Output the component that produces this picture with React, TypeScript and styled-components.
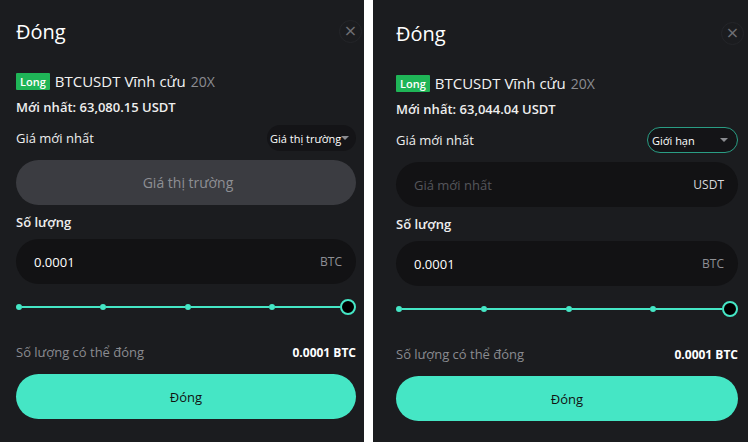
import React from "react";
import styled, { createGlobalStyle } from "styled-components";

const GlobalStyle = createGlobalStyle`
    html, body {
        margin: 0;
        padding: 0;
        background: #ffffff;
    }
    body {
        font-family: "Open Sans", "Noto Sans", Arial, sans-serif;
    }
`;

const Page = styled.div`
    display: flex;
    width: 751px;
    height: 442px;
    background: #ffffff;
`;

const Panel = styled.div<{ $wide?: boolean }>`
    width: ${(p) => (p.$wide ? "375px" : "364px")};
    margin-left: ${(p) => (p.$wide ? "9px" : "0")};
    height: 442px;
    box-sizing: border-box;
    padding: ${(p) => (p.$wide ? "2px 10px 0 23px" : "0 8px 0 16px")};
    background: #1b1c1f;
    display: flex;
    flex-direction: column;
    color: #ffffff;
`;

const Header = styled.div`
    height: 62px;
    display: flex;
    align-items: center;
    justify-content: space-between;
`;

const Title = styled.h1`
    margin: 0;
    font-size: 20px;
    font-weight: 500;
    color: #ffffff;
`;

const CloseButton = styled.button`
    width: 23px;
    height: 23px;
    margin-right: -6px;
    border-radius: 50%;
    border: 1px solid #242529;
    background: transparent;
    color: #6e6f74;
    font-size: 16px;
    line-height: 1;
    padding: 0;
    display: flex;
    align-items: center;
    justify-content: center;
    font-family: "DejaVu Sans", sans-serif;
`;

const PairRow = styled.div`
    margin-top: 9px;
    height: 20px;
    display: flex;
    align-items: center;
    gap: 5px;
`;

const Badge = styled.span`
    background: #1fb557;
    color: #ffffff;
    font-size: 11px;
    font-weight: 600;
    padding: 0 4px;
    height: 17px;
    line-height: 17px;
    border-radius: 1px;
`;

const Pair = styled.span`
    font-size: 15px;
    font-weight: 500;
    color: #f2f2f2;
`;

const Leverage = styled.span`
    font-size: 14px;
    color: #8c8d92;
`;

const Latest = styled.div`
    margin-top: 6px;
    height: 20px;
    line-height: 20px;
    font-size: 13px;
    font-weight: 600;
    color: #eeeeee;
`;

const PriceRow = styled.div`
    margin-top: 8px;
    height: 26px;
    display: flex;
    align-items: center;
    justify-content: space-between;
    font-size: 13px;
    color: #eeeeee;
`;

const Select = styled.div<{ $active?: boolean }>`
    height: 26px;
    box-sizing: border-box;
    width: ${(p) => (p.$active ? "91px" : "89px")};
    border-radius: 13px;
    background: #141417;
    border: ${(p) => (p.$active ? "1.5px solid #2a9d84" : "none")};
    display: flex;
    align-items: center;
    justify-content: ${(p) => (p.$active ? "space-between" : "flex-start")};
    padding: ${(p) => (p.$active ? "0 9px 0 4px" : "0 0 0 3px")};
    font-size: 11px;
    font-weight: 500;
    color: #ffffff;
`;

const Caret = styled.span`
    width: 0;
    height: 0;
    border-left: 4px solid transparent;
    border-right: 4px solid transparent;
    border-top: 4px solid #8a8b90;
`;

const Field = styled.div<{ $muted?: boolean }>`
    height: 45px;
    border-radius: 23px;
    background: ${(p) => (p.$muted ? "#3b3c41" : "#121214")};
    display: flex;
    align-items: center;
    justify-content: ${(p) => (p.$muted ? "center" : "space-between")};
    padding: 0 14px 0 18px;
    font-size: 13px;
`;

const PriceField = styled(Field)`
    margin-top: 9px;
`;

const QtyField = styled(Field)`
    margin-top: 7px;
`;

const Muted = styled.span`
    color: #8e8f94;
    font-size: 14px;
`;

const Placeholder = styled.span`
    color: #55565b;
    font-size: 13px;
`;

const Value = styled.span`
    color: #ffffff;
    font-weight: 500;
    font-size: 13px;
`;

const Unit = styled.span<{ $bright?: boolean }>`
    color: ${(p) => (p.$bright ? "#d8d8dc" : "#8e8f94")};
    font-size: 12px;
`;

const Label = styled.div`
    margin-top: 7px;
    height: 20px;
    line-height: 20px;
    font-size: 13px;
    font-weight: 600;
    color: #eeeeee;
`;

const Slider = styled.div`
    margin-top: 15px;
    height: 16px;
    display: flex;
    align-items: center;
`;

const Dot = styled.span`
    width: 6px;
    height: 6px;
    border-radius: 50%;
    background: #45e6c5;
    flex: none;
`;

const Segment = styled.span<{ $grow?: number }>`
    flex: ${(p) => p.$grow ?? 78} 1 0;
    height: 2px;
    background: #45e6c5;
`;

const Thumb = styled.span`
    width: 16px;
    height: 16px;
    box-sizing: border-box;
    border-radius: 50%;
    border: 2px solid #45e6c5;
    background: #000000;
    flex: none;
`;

const AvailRow = styled.div`
    margin-top: 27px;
    height: 20px;
    display: flex;
    align-items: center;
    justify-content: space-between;
    font-size: 13px;
`;

const AvailLabel = styled.span`
    color: #8a8b90;
`;

const AvailValue = styled.span`
    color: #ffffff;
    font-weight: 700;
    font-size: 12px;
`;

const Submit = styled.button`
    margin-top: 12px;
    height: 45px;
    border: none;
    border-radius: 23px;
    background: #45e6c5;
    color: #111111;
    font-family: inherit;
    font-size: 13px;
    font-weight: 500;
`;

type Mode = "market" | "limit";

function ClosePanel({ mode, latest }: { mode: Mode; latest: string }) {
    const isLimit = mode === "limit";
    return (
        <Panel $wide={isLimit}>
            <Header>
                <Title>Đóng</Title>
                <CloseButton>×</CloseButton>
            </Header>
            <PairRow>
                <Badge>Long</Badge>
                <Pair>BTCUSDT Vĩnh cửu</Pair>
                <Leverage>20X</Leverage>
            </PairRow>
            <Latest>Mới nhất: {latest} USDT</Latest>
            <PriceRow>
                <span>Giá mới nhất</span>
                {isLimit ? (
                    <Select $active>
                        <span>Giới hạn</span>
                        <Caret />
                    </Select>
                ) : (
                    <Select>
                        <span>Giá thị trường</span>
                        <Caret />
                    </Select>
                )}
            </PriceRow>
            {isLimit ? (
                <PriceField>
                    <Placeholder>Giá mới nhất</Placeholder>
                    <Unit $bright>USDT</Unit>
                </PriceField>
            ) : (
                <PriceField $muted>
                    <Muted>Giá thị trường</Muted>
                </PriceField>
            )}
            <Label>Số lượng</Label>
            <QtyField>
                <Value>0.0001</Value>
                <Unit>BTC</Unit>
            </QtyField>
            <Slider>
                <Dot />
                <Segment />
                <Dot />
                <Segment />
                <Dot />
                <Segment />
                <Dot />
                <Segment $grow={65} />
                <Thumb />
            </Slider>
            <AvailRow>
                <AvailLabel>Số lượng có thể đóng</AvailLabel>
                <AvailValue>0.0001 BTC</AvailValue>
            </AvailRow>
            <Submit>Đóng</Submit>
        </Panel>
    );
}

export default function App() {
    return (
        <>
            <GlobalStyle />
            <Page>
                <ClosePanel mode="market" latest="63,080.15" />
                <ClosePanel mode="limit" latest="63,044.04" />
            </Page>
        </>
    );
}
